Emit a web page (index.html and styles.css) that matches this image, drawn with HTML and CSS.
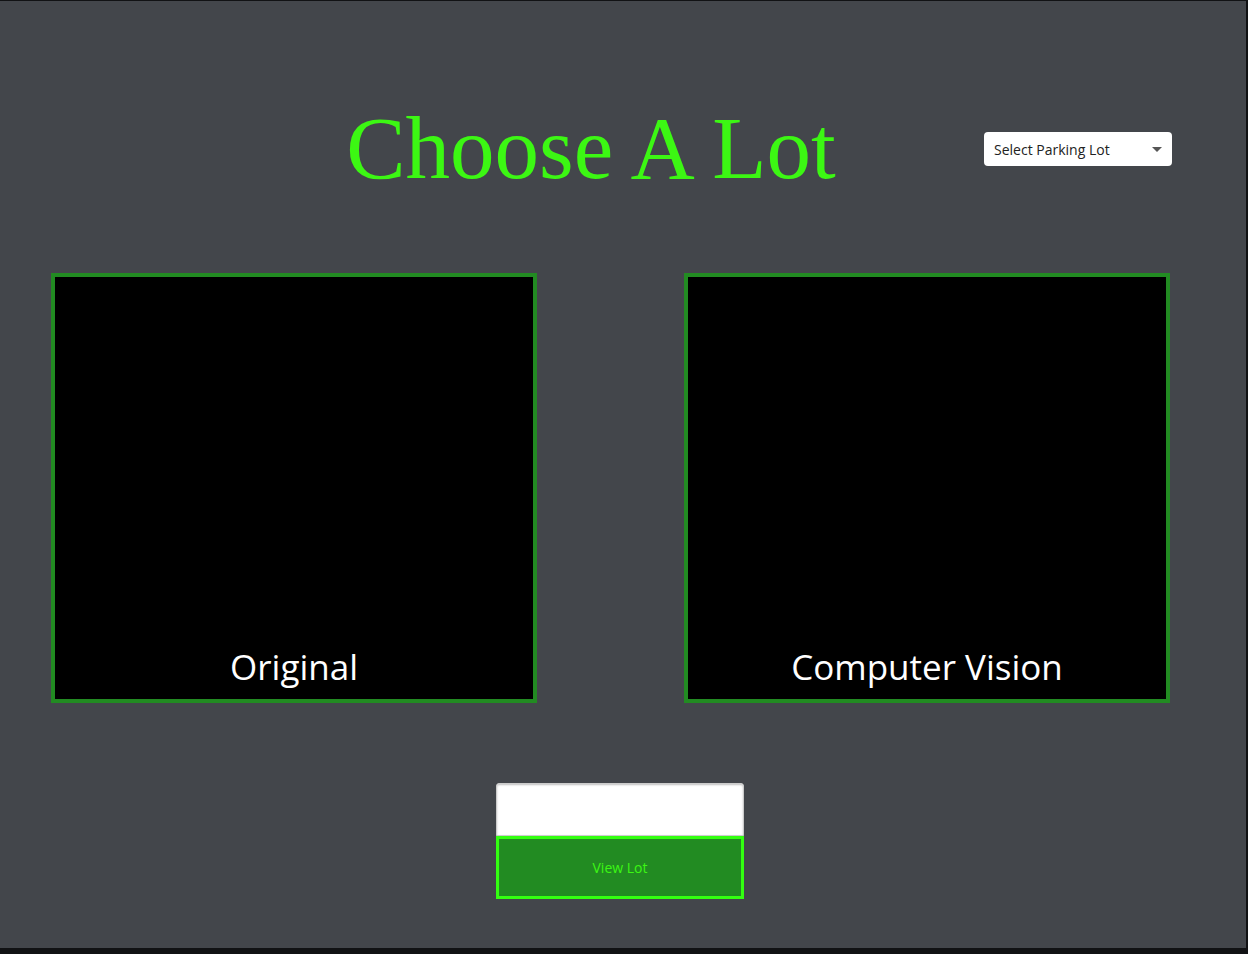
FILE: index.html
```html
<!DOCTYPE html>
<html lang="en">
<head>
<meta charset="utf-8">
<title>Choose A Lot</title>
<link rel="stylesheet" href="styles.css">
</head>
<body>
<div class="app">
  <header class="header">
    <h1 class="title">Choose A Lot</h1>
    <div class="select">
      <span class="select-text">Select Parking Lot</span>
      <svg class="caret" width="10" height="5" viewBox="0 0 10 5"><path d="M0 0H10L5 5Z" fill="#555"/></svg>
    </div>
  </header>
  <main class="panels">
    <div class="panel"><span class="panel-label">Original</span></div>
    <div class="panel"><span class="panel-label">Computer Vision</span></div>
  </main>
  <div class="controls">
    <div class="input"></div>
    <button class="btn">View Lot</button>
  </div>
</div>
</body>
</html>
```

FILE: styles.css
```css
* { box-sizing: border-box; }
html, body { margin: 0; padding: 0; }
body {
  background: #111214;
  width: 1248px;
  height: 954px;
  overflow: hidden;
}
.app {
  margin-top: 1px;
  width: 1246px;
  height: 947px;
  background: #43464b;
  display: flex;
  flex-direction: column;
}
.header {
  display: flex;
  align-items: center;
  height: 110px;
  margin-top: 92px;
  padding-right: 74px;
}
.title {
  flex: 1;
  margin: 0;
  padding-left: 198px;
  text-align: center;
  font-family: "Liberation Serif", "Times New Roman", serif;
  font-weight: normal;
  font-size: 89px;
  line-height: 1;
  color: #3cf713;
}
.select {
  width: 188px;
  height: 34px;
  background: #fff;
  border-radius: 4px;
  display: flex;
  align-items: center;
  justify-content: space-between;
  padding: 0 10px 0 10px;
  margin-top: 2px;
}
.select-text {
  font-family: "Open Sans", "Noto Sans", sans-serif;
  font-size: 14px;
  color: #222;
}
.caret { display: block; }
.panels {
  display: flex;
  gap: 147px;
  padding-left: 51px;
  margin-top: 70px;
}
.panel {
  width: 486px;
  height: 430px;
  background: #000;
  border: 4px solid #228b22;
  display: flex;
  flex-direction: column;
  justify-content: flex-end;
  align-items: center;
  padding-bottom: 11px;
}
.panel-label {
  font-family: "Open Sans", "Noto Sans", sans-serif;
  font-size: 35px;
  line-height: 1.2;
  color: #fff;
}
.controls {
  margin-top: 80px;
  margin-left: 496px;
  width: 248px;
  display: flex;
  flex-direction: column;
}
.input {
  height: 53px;
  background: #fff;
  border-radius: 3px 3px 0 0;
  box-shadow: inset 0 1px 2px rgba(0,0,0,0.25);
  border: 1px solid #ccc;
}
.btn {
  height: 63px;
  background: #228b22;
  border: 3px solid #33ff11;
  color: #3cf713;
  font-family: "Open Sans", "Noto Sans", sans-serif;
  font-size: 14px;
  padding: 0;
  margin: 0;
}
```
